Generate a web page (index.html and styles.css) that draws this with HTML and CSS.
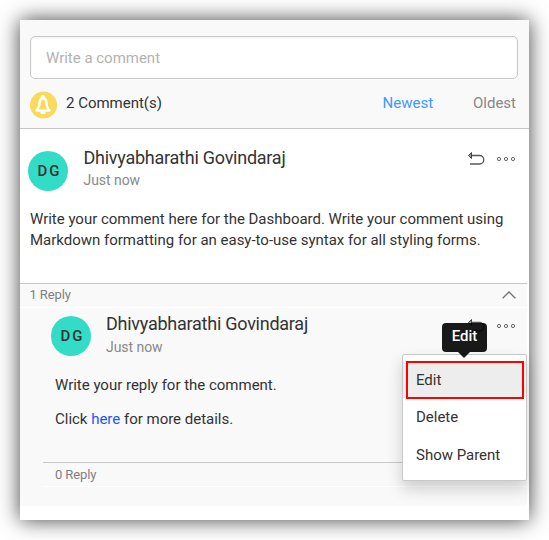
FILE: index.html
```html
<!DOCTYPE html>
<html lang="en">
<head>
<meta charset="utf-8">
<title>Comments</title>
<link rel="stylesheet" href="styles.css">
</head>
<body>
<main class="panel">
  <header class="top">
    <div class="input">Write a comment</div>
    <div class="summary">
      <svg class="bell" viewBox="0 0 28 28"><circle cx="13.500" cy="14" r="13.600" fill="#f8db5c"/><g fill="none" stroke="#fff" stroke-width="2.400"><path d="M13 7C9.600 7.600 9.600 10.500 9.300 14C9.100 16.700 7.600 17.800 6.500 19.600H19.500C18.400 17.800 16.900 16.700 16.700 14C16.400 10.500 16.400 7.600 13 7Z" stroke-linejoin="round"/><circle cx="13" cy="6" r="1.300" stroke-width="1.700"/><path d="M10.800 21Q13 22.800 15.200 21"/></g></svg>
      <span class="count">2 Comment(s)</span>
      <span class="newest">Newest</span>
      <span class="oldest">Oldest</span>
    </div>
  </header>
  <article class="comment">
    <div class="head">
      <div class="avatar">DG</div>
      <div class="who"><div class="name">Dhivyabharathi Govindaraj</div><div class="time">Just now</div></div>
      <svg class="undo" viewBox="0 0 18 16"><path d="M5 4.500H12.500A4 4 0 0 1 12.500 13H3" fill="none" stroke="#555" stroke-width="1.300"/><path d="M4.500 1.500L1.500 4.500L4.500 7.500Z" fill="#8a9aa8" stroke="#444"/></svg>
      <svg class="dots" viewBox="0 0 20 6"><g fill="none" stroke="#666"><circle cx="3" cy="3" r="1.600"/><circle cx="10" cy="3" r="1.600"/><circle cx="17" cy="3" r="1.600"/></g></svg>
    </div>
    <p class="body">Write your comment here for the Dashboard. Write your comment using<br>Markdown formatting for an easy-to-use syntax for all styling forms.</p>
  </article>
  <section class="replies">
    <div class="bar"><span>1 Reply</span><svg class="chevron" viewBox="0 0 14 8"><path d="M.7 7.300L7 1L13.300 7.300" fill="none" stroke="#777" stroke-width="1.400"/></svg></div>
    <article class="reply">
      <div class="head">
        <div class="avatar">DG</div>
        <div class="who"><div class="name">Dhivyabharathi Govindaraj</div><div class="time">Just now</div></div>
        <svg class="undo" viewBox="0 0 18 16"><path d="M5 4.500H12.500A4 4 0 0 1 12.500 13H3" fill="none" stroke="#555" stroke-width="1.300"/><path d="M4.500 1.500L1.500 4.500L4.500 7.500Z" fill="#8a9aa8" stroke="#444"/></svg>
        <svg class="dots" viewBox="0 0 20 6"><g fill="none" stroke="#666"><circle cx="3" cy="3" r="1.600"/><circle cx="10" cy="3" r="1.600"/><circle cx="17" cy="3" r="1.600"/></g></svg>
      </div>
      <p class="line">Write your reply for the comment.</p>
      <p class="line">Click <a>here</a> for more details.</p>
      <div class="bar nested"><span>0 Reply</span></div>
    </article>
  </section>
  <div class="menu">
    <div class="item active">Edit</div>
    <div class="item">Delete</div>
    <div class="item">Show Parent</div>
  </div>
  <div class="tooltip">Edit</div>
</main>
</body>
</html>
```
FILE: styles.css
```css
*, *::after { box-sizing: border-box; }
body { margin: 0; background: #fff; font-family: Roboto, "Liberation Sans", sans-serif; font-size: 15px; letter-spacing: -.012px; color: #333; }
svg { display: block; flex: none; }
p { margin: 0; }
.panel { position: relative; width: 509px; height: 500px; margin: 20px; background: #fff; box-shadow: 0 0 20px rgba(0, 0, 0, .75); }
.top { height: 109px; padding: 16px 11px 0 10px; background: #f9f9f9; border-bottom: 1px solid #c8c8c8; }
.input { height: 43px; padding-left: 15px; line-height: 42px; color: #b2b2b2; background: #fff; border: 1px solid #c8c8c8; border-radius: 5px; box-shadow: inset 0 1px 2px rgba(0, 0, 0, .06); }
.summary { display: flex; margin-top: 12px; line-height: 24px; }
.bell { width: 28px; height: 28px; }
.count { flex: 1; margin-left: 8px; }
.newest { color: #3f97ff; margin-right: 40px; }
.oldest { color: #888; margin-right: 2px; }
.comment { height: 154px; padding: 18px 13px 0 8px; }
.head { display: flex; }
.avatar { width: 40px; height: 40px; margin-top: 4px; border-radius: 50%; background: #33dcc6; line-height: 40px; text-align: center; font-weight: 500; letter-spacing: 2px; padding-left: 3px; }
.who { flex: 1; margin: -1px 0 0 15.500px; }
.name { font-size: 18px; line-height: 24px; letter-spacing: -.25px; }
.time { font-size: 14px; line-height: 20px; letter-spacing: -.05px; color: #888; }
.undo { width: 18px; height: 16px; margin: 4px 11px 0 0; }
.dots { width: 20px; height: 6px; margin-top: 9px; }
.body { margin: 18px 0 0 2px; line-height: 21px; white-space: nowrap; }
.replies { width: 507px; height: 223px; background: #f9f9f9; }
.bar { display: flex; justify-content: space-between; align-items: center; height: 25px; padding: 0 11px; padding-left: 9.500px; border-top: 1px solid #c8c8c8; border-bottom: 1px solid #fff; font-size: 13px; line-height: 23px; letter-spacing: -.1px; color: #808080; }
.bar span { margin-top: -2px; }
.nested span { margin-top: 0; }
.chevron { width: 14px; height: 8px; margin-top: -1px; }
.reply { padding: 4px 11px 0 31px; }
.line { margin: 17px 0 0 4px; line-height: 17px; }
.reply .head { height: 48px; }
.reply .who { margin: 0 0 0 15px; }
.reply .time { padding-top: 1px; }
.reply .undo { margin-top: 6px; }
.reply .dots { margin-top: 11px; }
.reply .bar { margin: 34px -11px 0 -8px; padding-left: 12px; }
a { color: #1a55ff; }
.menu { position: absolute; left: 382px; top: 334px; width: 125px; height: 127px; padding: 6px 0; background: #fff; border: 1px solid #c8c8c8; border-radius: 2px; box-shadow: 0 8px 16px rgba(0, 0, 0, .18); }
.item { height: 38px; padding-left: 13px; line-height: 38px; }
.active { height: 37px; background: #ededed; position: relative; }
.active::after { content: ""; position: absolute; left: 3px; top: 0; width: 118px; height: 38px; border: 2px solid #f00; }
.tooltip { position: absolute; left: 422px; top: 303px; width: 45px; height: 29px; border-radius: 4px; background: rgba(0, 0, 0, .9); color: #fff; text-align: center; line-height: 26px; font-weight: 500; }
.tooltip::after { content: ""; position: absolute; left: 16px; top: 29px; border: 6px solid transparent; border-top-color: rgba(0, 0, 0, .9); border-bottom: 0; }
```
